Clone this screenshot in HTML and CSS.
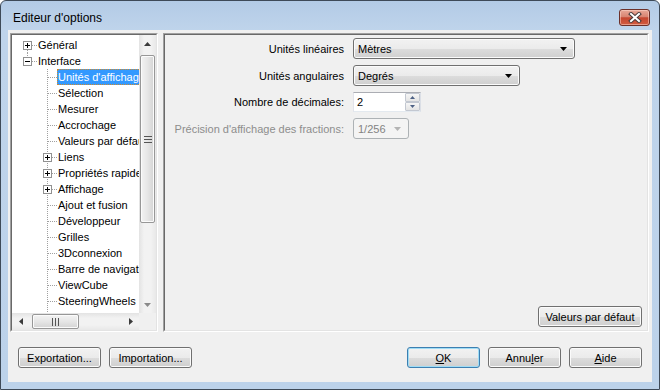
FILE: index.html
```html
<!DOCTYPE html>
<html lang="fr">
<head>
    <meta charset="UTF-8">
    <title>Editeur d'options</title>
    <link rel="stylesheet" href="styles.css">
</head>
<body>
    <div class="window">
        <div class="titlebar">
            <span class="title">Editeur d'options</span>
            <div class="close">
                <svg width="14" height="11" viewBox="0 0 14 11">
                    <path d="M3 2l8 7M11 2l-8 7" stroke="#4a3a3a" stroke-width="4" stroke-linecap="square"/>
                    <path d="M3 2l8 7M11 2l-8 7" stroke="#fff" stroke-width="2" stroke-linecap="square"/>
                </svg>
            </div>
        </div>

        <div class="client">
            <div class="top">
                <div class="tree">
                    <div class="tree-inner">
                        <div class="tree-body">
                            <div class="tree-rows" id="tree"></div>
                            <div class="vscroll">
                                <div class="sb-btn">
                                    <svg width="7" height="4"><path d="M0 4h7L3.5 0z" fill="#3b3b3b"/></svg>
                                </div>
                                <div class="vtrack">
                                    <div class="vthumb">
                                        <svg width="8" height="7"><path d="M0 .5h8M0 3.5h8M0 6.5h8" stroke="#555"/></svg>
                                    </div>
                                </div>
                                <div class="sb-btn">
                                    <svg width="7" height="4"><path d="M0 0h7L3.5 4z" fill="#8a8a8a"/></svg>
                                </div>
                            </div>
                        </div>
                        <div class="tree-foot">
                            <div class="hscroll">
                                <div class="sb-btn">
                                    <svg width="4" height="7"><path d="M4 0v7L0 3.5z" fill="#3b3b3b"/></svg>
                                </div>
                                <div class="htrack">
                                    <div class="hthumb">
                                        <svg width="7" height="8"><path d="M.5 0v8M3.5 0v8M6.5 0v8" stroke="#555"/></svg>
                                    </div>
                                </div>
                                <div class="sb-btn">
                                    <svg width="4" height="7"><path d="M0 0v7l4-3.5z" fill="#3b3b3b"/></svg>
                                </div>
                            </div>
                            <div class="corner"></div>
                        </div>
                    </div>
                </div>

                <div class="panel">
                    <div class="panel-inner">
                        <div class="form">
                            <label>Unités linéaires</label>
                            <div class="combo wide">
                                <span>Mètres</span>
                                <svg width="7" height="4"><path d="M0 0h7L3.5 4z" fill="#000"/></svg>
                            </div>

                            <label>Unités angulaires</label>
                            <div class="combo mid">
                                <span>Degrés</span>
                                <svg width="7" height="4"><path d="M0 0h7L3.5 4z" fill="#000"/></svg>
                            </div>

                            <label>Nombre de décimales:</label>
                            <div class="spin">
                                <span>2</span>
                                <div class="spin-btns">
                                    <div class="spin-btn"><svg width="5" height="3"><path d="M0 3h5L2.5 0z" fill="#4d6185"/></svg></div>
                                    <div class="spin-btn"><svg width="5" height="3"><path d="M0 0h5L2.5 3z" fill="#4d6185"/></svg></div>
                                </div>
                            </div>

                            <label class="disabled">Précision d'affichage des fractions:</label>
                            <div class="combo small off">
                                <span>1/256</span>
                                <svg width="7" height="4"><path d="M0 0h7L3.5 4z" fill="#b4b4b4"/></svg>
                            </div>
                        </div>
                        <button class="btn defaults">Valeurs par défaut</button>
                    </div>
                </div>
            </div>

            <div class="bottom">
                <div class="group">
                    <button class="btn io">Exportation...</button>
                    <button class="btn io">Importation...</button>
                </div>
                <div class="group">
                    <button class="btn act primary"><u>O</u>K</button>
                    <button class="btn act">Annu<u>l</u>er</button>
                    <button class="btn act"><u>A</u>ide</button>
                </div>
            </div>
        </div>
    </div>

    <script>
        const nodes = [
            { text: "Général", level: 0, cell: "first-plus" },
            { text: "Interface", level: 0, cell: "last-minus" },
            { text: "Unités d'affichage", level: 1, selected: true },
            { text: "Sélection", level: 1 },
            { text: "Mesurer", level: 1 },
            { text: "Accrochage", level: 1 },
            { text: "Valeurs par défaut", level: 1 },
            { text: "Liens", level: 1, cell: "tee-plus" },
            { text: "Propriétés rapides", level: 1, cell: "tee-plus" },
            { text: "Affichage", level: 1, cell: "tee-plus" },
            { text: "Ajout et fusion", level: 1 },
            { text: "Développeur", level: 1 },
            { text: "Grilles", level: 1 },
            { text: "3Dconnexion", level: 1 },
            { text: "Barre de navigation", level: 1 },
            { text: "ViewCube", level: 1 },
            { text: "SteeringWheels", level: 1 },
            { text: "Interface utilisateur", level: 1 }
        ];

        const dot = 'stroke="#a0a0a0" stroke-dasharray="1 1"';
        const box = '<rect x="6.5" y="4.5" width="8" height="8" fill="#fff" stroke="#919191"/>';
        const minus = '<path d="M8 8.5h5" stroke="#000"/>';
        const plus = '<path d="M8 8.5h5M10.5 6v5" stroke="#000"/>';

        const shapes = {
            "blank": "",
            "tee": `<path d="M10.5 0V16" ${dot}/><path d="M11 8.5H20" ${dot}/>`,
            "first-plus": `<path d="M10.5 13V16" ${dot}/><path d="M15 8.5H20" ${dot}/>${box}${plus}`,
            "last-minus": `<path d="M10.5 0V4" ${dot}/><path d="M15 8.5H20" ${dot}/>${box}${minus}`,
            "tee-plus": `<path d="M10.5 0V16" ${dot}/><path d="M15 8.5H20" ${dot}/>${box}${plus}`
        };

        function cell(type) {
            return `<svg class="cell" width="20" height="16" shape-rendering="crispEdges">${shapes[type]}</svg>`;
        }

        document.querySelector("#tree").innerHTML = nodes.map(node => {
            let cells = "";
            if (node.level === 0) {
                cells = cell(node.cell);
            } else {
                cells = cell("blank") + cell(node.cell || "tee");
            }
            return `
                <div class="node">
                    ${cells}
                    <span class="label${node.selected ? " selected" : ""}">${node.text}</span>
                </div>`;
        }).join("");
    </script>
</body>
</html>
```

FILE: styles.css
```css
* {
    margin: 0;
    padding: 0;
    box-sizing: border-box;
}

body {
    font-family: "Liberation Sans", Arial, sans-serif;
    font-size: 11px;
    color: #000;
    background: #fff;
}

.window {
    width: 660px;
    height: 390px;
    border: 1px solid #3e4a58;
    border-radius: 6px 6px 0 0;
    background: linear-gradient(#b3cbe6, #bfd4eb 30px, #bcd2ea);
    padding: 0 7px 7px 7px;
    display: flex;
    flex-direction: column;
}

/* Barre de titre */
.titlebar {
    height: 29px;
    display: flex;
    align-items: center;
    justify-content: space-between;
    padding: 4px 2px 0 5px;
}

.title {
    font-size: 12px;
    color: #000;
}

.close {
    width: 31px;
    height: 17px;
    border: 1px solid #6c3029;
    border-radius: 3px;
    background: linear-gradient(#e8a898, #d88472 45%, #c54630 52%, #d25c40);
    box-shadow: inset 0 0 0 1px rgba(255, 220, 210, 0.5);
    display: flex;
    align-items: center;
    justify-content: center;
}

/* Zone client */
.client {
    flex: 1;
    background: #f0f0f0;
    display: flex;
    flex-direction: column;
    padding-top: 3px;
}

.top {
    height: 299px;
    display: flex;
    gap: 5px;
    padding: 0 3px 0 2px;
}

/* Arborescence */
.tree {
    width: 148px;
    border: 1px solid;
    border-color: #a0a0a0 #fff #fff #a0a0a0;
}

.tree-inner {
    height: 100%;
    border: 1px solid;
    border-color: #696969 #e3e3e3 #e3e3e3 #696969;
    display: flex;
    flex-direction: column;
}

.tree-body {
    flex: 1;
    display: flex;
    min-height: 0;
}

.tree-rows {
    flex: 1;
    background: #fff;
    overflow: hidden;
    padding-top: 2px;
}

.node {
    display: flex;
    align-items: center;
    height: 16px;
    padding-left: 5px;
    white-space: nowrap;
}

.cell {
    flex: none;
    display: block;
}

.label {
    line-height: 16px;
    height: 16px;
    padding: 0 2px 0 1px;
}

.label.selected {
    background: #3399ff;
    color: #fff;
    outline: 1px dotted #d08a2c;
    outline-offset: -1px;
}

/* Barres de défilement */
.vscroll {
    width: 17px;
    display: flex;
    flex-direction: column;
    background: linear-gradient(to right, #e3e3e3, #f2f2f2 30%, #f2f2f2 70%, #e8e8e8);
}

.sb-btn {
    width: 17px;
    height: 17px;
    flex: none;
    display: flex;
    align-items: center;
    justify-content: center;
}

.vtrack {
    flex: 1;
    padding: 3px 1px 0 1px;
}

.vthumb {
    height: 168px;
    border: 1px solid #979797;
    border-radius: 2px;
    background: linear-gradient(to right, #f3f3f3, #e6e6e6 50%, #d4d4d4);
    box-shadow: inset 0 0 0 1px #fbfbfb;
    display: flex;
    align-items: center;
    justify-content: center;
}

.tree-foot {
    height: 17px;
    display: flex;
}

.hscroll {
    flex: 1;
    display: flex;
    background: linear-gradient(#e3e3e3, #f2f2f2 30%, #f2f2f2 70%, #e8e8e8);
}

.htrack {
    flex: 1;
    padding: 1px 0 1px 3px;
}

.hthumb {
    width: 47px;
    height: 100%;
    border: 1px solid #979797;
    border-radius: 2px;
    background: linear-gradient(#f3f3f3, #e6e6e6 50%, #d4d4d4);
    box-shadow: inset 0 0 0 1px #fbfbfb;
    display: flex;
    align-items: center;
    justify-content: center;
}

.corner {
    width: 17px;
    background: #f0f0f0;
}

/* Panneau de droite */
.panel {
    flex: 1;
    border: 1px solid;
    border-color: #a0a0a0 #fff #fff #a0a0a0;
}

.panel-inner {
    height: 100%;
    border: 1px solid;
    border-color: #696969 #e3e3e3 #e3e3e3 #696969;
    display: flex;
    flex-direction: column;
    padding: 3px 5px 3px 0;
}

.form {
    display: grid;
    grid-template-columns: 179px auto;
    column-gap: 9px;
    row-gap: 6px;
    align-items: center;
    justify-items: start;
}

.form label {
    justify-self: end;
}

.form label.disabled {
    color: #8d8d8d;
}

.combo {
    height: 21px;
    display: flex;
    align-items: center;
    justify-content: space-between;
    padding: 0 7px 0 4px;
    border: 1px solid #707070;
    border-radius: 3px;
    background: linear-gradient(#f2f2f2, #ebebeb 50%, #dddddd 50%, #cfcfcf);
    box-shadow: inset 0 0 0 1px #fbfbfb;
}

.combo.wide {
    width: 222px;
}

.combo.mid {
    width: 167px;
}

.combo.small {
    width: 56px;
}

.combo.off {
    border-color: #adb2b5;
    background: #f4f4f4;
    box-shadow: none;
    color: #838383;
}

.spin {
    width: 68px;
    height: 20px;
    display: flex;
    align-items: center;
    justify-content: space-between;
    background: #fff;
    border: 1px solid;
    border-color: #abadb3 #dbdfe6 #e3e9ef #e2e3ea;
    padding-left: 3px;
}

.spin-btns {
    width: 15px;
    height: 18px;
    display: flex;
    flex-direction: column;
}

.spin-btn {
    flex: 1;
    display: flex;
    align-items: center;
    justify-content: center;
    border: 1px solid #c3c8d1;
    border-radius: 1px;
    background: linear-gradient(#f6f6f6, #e4e4e4);
}

/* Boutons */
.btn {
    font-family: inherit;
    font-size: 11px;
    color: #000;
    height: 21px;
    border: 1px solid #707070;
    border-radius: 3px;
    background: linear-gradient(#f2f2f2, #ebebeb 50%, #dddddd 50%, #cfcfcf);
    box-shadow: inset 0 0 0 1px #fbfbfb;
}

.btn u {
    text-decoration: underline;
}

.defaults {
    margin-top: auto;
    align-self: flex-end;
    width: 104px;
}

.bottom {
    display: flex;
    justify-content: space-between;
    padding: 15px 10px 0 10px;
}

.group {
    display: flex;
    gap: 8px;
}

.io {
    width: 83px;
}

.act {
    width: 73px;
}

.primary {
    border-color: #3c7fb1;
    box-shadow: inset 0 0 0 1px #9fdcf5;
}
```
